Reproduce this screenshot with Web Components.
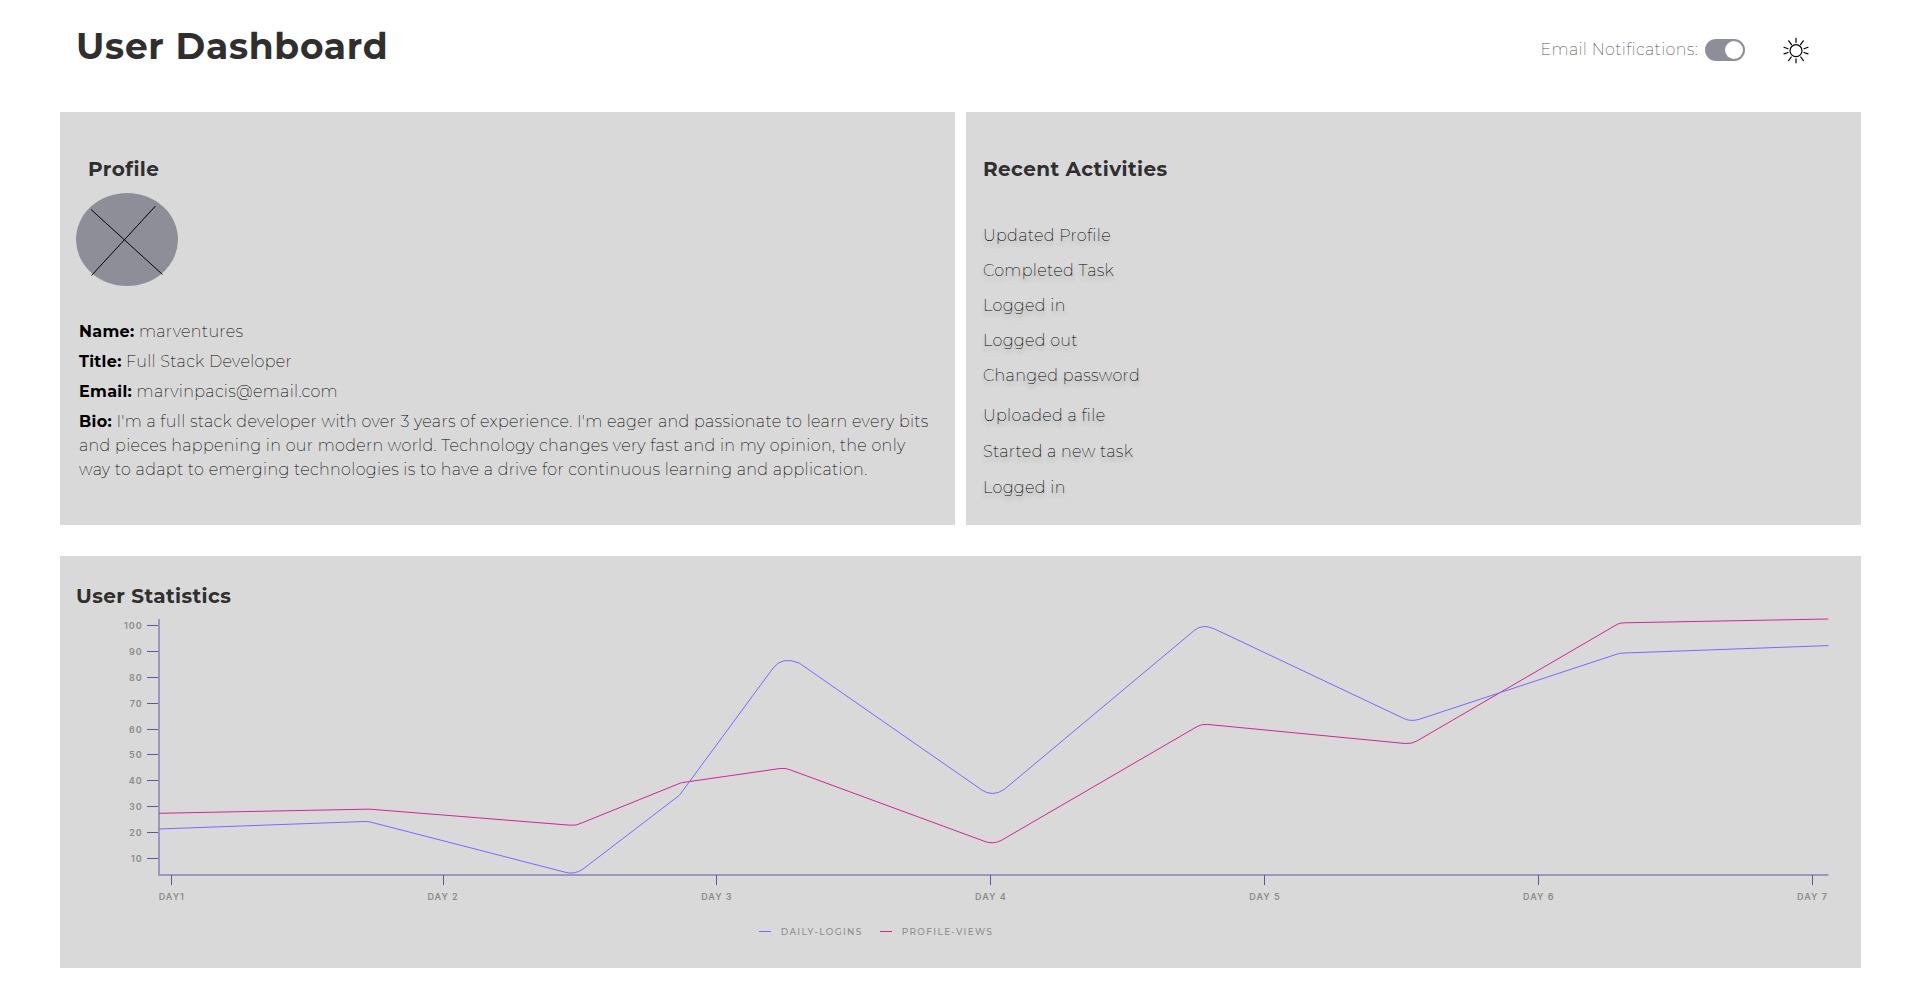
<!DOCTYPE html>
<html lang="en">
<head>
<meta charset="utf-8">
<title>User Dashboard</title>
<style>
  body {
    margin: 0;
    background: #fff;
    color: #2f2f2f;
    font-family: Montserrat, Inter, "Open Sans", sans-serif;
    font-size: 16px;
    line-height: 24px;
    letter-spacing: .02em;
  }
</style>
</head>
<body>
<user-dashboard></user-dashboard>

<script>
class ShadowElement extends HTMLElement {
  connectedCallback() {
    if (this.shadowRoot) return;
    this.attachShadow({ mode: "open" }).innerHTML = this.render();
  }
}

customElements.define("toggle-switch", class extends ShadowElement {
  render() {
    return `
      <style>
        :host { display: block; color: #505060; font-weight: 200; }
        label { display: flex; align-items: center; gap: 7px; }
        input {
          appearance: none; flex: none; display: flex; align-items: center;
          justify-content: flex-start; box-sizing: border-box;
          width: 40px; height: 22px; margin: 0; padding: 2px;
          border-radius: 11px; background: #8e8e99; cursor: pointer;
        }
        input:checked { justify-content: flex-end; }
        input::before {
          content: ""; width: 18px; height: 18px; border-radius: 50%; background: #fff;
        }
      </style>
      <label><span><slot></slot></span><input type="checkbox" role="switch" checked></label>`;
  }
});

customElements.define("theme-button", class extends ShadowElement {
  render() {
    return `
      <style>
        :host { display: block; }
        button { display: block; border: 0; padding: 0; background: none; cursor: pointer; }
        svg { display: block; fill: none; stroke: #000; stroke-width: 1.2; stroke-linecap: round; }
      </style>
      <button type="button" aria-label="Switch theme">
        <svg width="26" height="28" viewBox="0 -1 26 28">
          <circle cx="13" cy="13.700" r="6"/>
          <path d="M13 1.300v4M13 21.800v4M17.500 7.700l2.800-3.900M21 11.700l4-1.400M21 15.500l4 1.400M17.800 20l2.600 3.600M8.500 7.700L5.700 3.800M5 11.700L1 10.300M5 15.500l-4 1.400M8.200 20l-2.600 3.600"/>
        </svg>
      </button>`;
  }
});

customElements.define("page-header", class extends ShadowElement {
  render() {
    return `
      <style>
        :host { display: flex; justify-content: space-between; align-items: center; padding: 24px 52px 44px 16px; }
        h1 { margin: 0; font-size: 36px; line-height: 44px; font-weight: 700; letter-spacing: .02em; }
        div { display: flex; align-items: center; gap: 38px; padding-top: 8px; }
      </style>
      <h1><slot></slot></h1>
      <div>
        <toggle-switch>Email Notifications:</toggle-switch>
        <theme-button></theme-button>
      </div>`;
  }
});

customElements.define("dash-panel", class extends ShadowElement {
  render() {
    return `
      <style>
        :host { display: block; background: #d9d9d9; }
        h2 { margin: 0; font-size: 20px; line-height: 24px; font-weight: 700; }
        ::slotted([slot=title]) { letter-spacing: .02em; }
      </style>
      <h2><slot name="title"></slot></h2>
      <slot></slot>`;
  }
});

customElements.define("user-avatar", class extends ShadowElement {
  render() {
    return `
      <style>
        :host { display: block; }
        svg { display: block; }
      </style>
      <svg width="102" height="93" viewBox="0 0 102 93" role="img" aria-label="Profile picture">
        <ellipse cx="51" cy="46.500" rx="51" ry="46.500" fill="#8e8e99"/>
        <path d="M15 16.500L86.500 81.500M79.500 13L15.500 82.500" stroke="#000" fill="none"/>
      </svg>`;
  }
});

customElements.define("profile-details", class extends ShadowElement {
  render() {
    return `
      <style>
        :host { display: block; }
        dl { display: flex; flex-direction: column; gap: 6px; margin: 0; color: #000; font-weight: 200; }
        dt { display: inline; font-weight: 700; }
        dd { display: inline; margin: 0; }
      </style>
      <dl>
        <div><dt>Name:</dt> <dd>marventures</dd></div>
        <div><dt>Title:</dt> <dd>Full Stack Developer</dd></div>
        <div><dt>Email:</dt> <dd>marvinpacis@email.com</dd></div>
        <div><dt>Bio:</dt> <dd>I'm a full stack developer with over 3 years of experience. I'm eager and passionate to learn every bits and pieces happening in our modern world. Technology changes very fast and in my opinion, the only way to adapt to emerging technologies is to have a drive for continuous learning and application.</dd></div>
      </dl>`;
  }
});

customElements.define("activity-list", class extends ShadowElement {
  render() {
    const items = ["Updated Profile", "Completed Task", "Logged in", "Logged out",
      "Changed password", "Uploaded a file", "Started a new task", "Logged in"];
    return `
      <style>
        :host { display: block; }
        ul {
          display: flex; flex-direction: column; gap: 11px; margin: 0; padding: 0;
          list-style: none; color: #000; font-weight: 200; text-shadow: 0 4px 4px rgba(0, 0, 0, .25);
        }
        li:nth-child(n+6) { padding-top: 1px; }
        li:nth-child(6) { padding-top: 5px; }
      </style>
      <ul>${items.map(t => `<li>${t}</li>`).join("")}</ul>`;
  }
});

customElements.define("stats-chart", class extends ShadowElement {
  render() {
    const ys = [100, 90, 80, 70, 60, 50, 40, 30, 20, 10];
    const xs = ["DAY1", "DAY 2", "DAY 3", "DAY 4", "DAY 5", "DAY 6", "DAY 7"];
    return `
      <style>
        :host { display: block; font-size: 9px; line-height: 13px; color: #8c8c8c; }
        .chart {
          display: grid; grid-template-columns: auto minmax(0, 1fr);
          font-family: Inter, sans-serif; font-weight: 600; letter-spacing: 1px;
        }
        ol { list-style: none; margin: 0; padding: 0; display: flex; justify-content: space-between; }
        .y { flex-direction: column; height: 246px; }
        .y li { display: flex; align-items: center; justify-content: flex-end; gap: 4px; }
        .y li::after { content: ""; width: 12px; height: 1px; background: #5f5799; }
        .x { grid-column: 2; }
        .x li { display: flex; flex-direction: column; align-items: center; gap: 5px; }
        .x li::before { content: ""; width: 1px; height: 10px; background: #5f5799; }
        svg { display: block; width: 100%; height: 256px; overflow: visible; fill: none; }
        path { vector-effect: non-scaling-stroke; }
        .legend {
          display: flex; justify-content: center; gap: 17px; padding: 22px 200px 0 0;
          font-weight: 500; letter-spacing: .15em;
        }
        .legend span { display: flex; align-items: center; gap: 10px; }
        .legend span::before { content: ""; width: 12px; height: 1px; background: var(--c); }
      </style>
      <div class="chart">
        <ol class="y">${ys.map(v => `<li>${v}</li>`).join("")}</ol>
        <svg viewBox="159 618 1669 256" preserveAspectRatio="none" role="img" aria-label="Daily logins and profile views by day">
          <path stroke="#9c97bb" stroke-width="2" d="M159 618V874H1828"/>
          <path stroke="#cf2894" d="M159 812.300L366 808.200Q370 808 374 808.500L570 824.200Q576 825 582 821.800L678 783Q681 781.500 685 781.200L780 767.500Q785 766.800 790 768.800L983 839.800Q992 844 1001 839.500L1197 725.500Q1201 723 1207 723.400L1405 742.500Q1412 743 1417 739.800L1617 623.300Q1620 621.800 1624 621.800L1828 618"/>
          <path stroke="#766bff" d="M159 828L364 820.500Q368 820.300 371 821.200L565 871.200Q574 874 583 868L679 794.500L681 792L773 667Q782 655 799 662L981 788.500Q992 796.500 1004 788.500L1194 629.500Q1202 622.500 1214 627.800L1403 717.200Q1410 721 1419 718.300L1617 653Q1619 652.200 1622 652.100L1828 644.600"/>
        </svg>
        <ol class="x">${xs.map(v => `<li>${v}</li>`).join("")}</ol>
      </div>
      <div class="legend">
        <span style="--c:#766bff">DAILY-LOGINS</span>
        <span style="--c:#cf2894">PROFILE-VIEWS</span>
      </div>`;
  }
});

customElements.define("user-dashboard", class extends ShadowElement {
  render() {
    return `
      <style>
        :host { display: block; padding: 0 59px 0 60px; }
        .row { display: grid; grid-template-columns: 1fr 1fr; gap: 11px; margin-bottom: 31px; }
        .profile { padding: 45px 18px 42px; }
        .profile [slot=title] { padding-left: 10px; }
        .profile user-avatar { margin: 12px 0 34px -2px; }
        .profile profile-details { padding-left: 1px; }
        .activity { padding: 45px 17px 25px; }
        .activity activity-list { margin-top: 43px; }
        .stats { padding: 28px 33px 30px 16px; }
        .stats stats-chart { margin: 11px 0 0 48px; }
      </style>
      <page-header>User Dashboard</page-header>
      <main>
        <div class="row">
          <dash-panel class="profile">
            <span slot="title">Profile</span>
            <user-avatar></user-avatar>
            <profile-details></profile-details>
          </dash-panel>
          <dash-panel class="activity">
            <span slot="title">Recent Activities</span>
            <activity-list></activity-list>
          </dash-panel>
        </div>
        <dash-panel class="stats">
          <span slot="title">User Statistics</span>
          <stats-chart></stats-chart>
        </dash-panel>
      </main>`;
  }
});
</script>
</body>
</html>
